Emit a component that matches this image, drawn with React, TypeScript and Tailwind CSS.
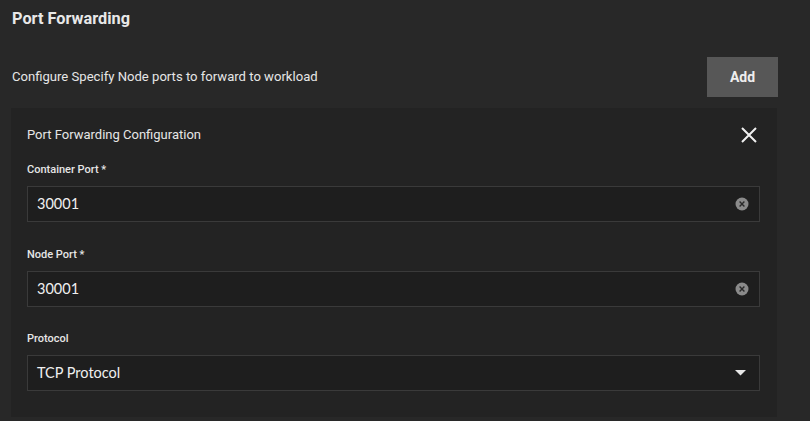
import React from "react";

function ClearIcon() {
  return (
    <svg width="14" height="14" viewBox="0 0 14 14">
      <circle cx="7" cy="7" r="6.5" fill="#8a8a8a" />
      <path d="M4.6 4.6 L9.4 9.4 M9.4 4.6 L4.6 9.4" stroke="#2a2a2a" strokeWidth="1.4" />
    </svg>
  );
}

function Field({ label, value, select }: { label: string; value: string; select?: boolean }) {
  return (
    <div className="flex flex-col">
      <div className="text-[11px] font-medium text-[#e6e6e6] leading-[18px] mb-[7px]">{label}</div>
      <div className="h-[36px] bg-[#1e1e1e] border border-[#3a3a3a] flex items-center pl-[9px] pr-[10px]">
        <span className="flex-1 text-[14.5px] text-[#f0f0f0] font-['Lato',sans-serif]">{value}</span>
        {select ? (
          <svg width="11" height="6" viewBox="0 0 11 6" className="mr-[3px]">
            <path d="M0 0 L11 0 L5.5 5.5 Z" fill="#e8e8e8" />
          </svg>
        ) : (
          <ClearIcon />
        )}
      </div>
    </div>
  );
}

export default function App() {
  return (
    <div className="w-[810px] h-[421px] bg-[#282828] overflow-hidden font-['Roboto',sans-serif] text-[#e6e6e6]">
      <div className="pl-[12px] pt-[8px] text-[16.3px] font-bold leading-[22px] text-[#e8e8e8]">Port Forwarding</div>
      <div className="flex items-center justify-between pl-[12px] pr-[32px] mt-[27px]">
        <div className="text-[13.1px]">Configure Specify Node ports to forward to workload</div>
        <button className="w-[71px] h-[40px] bg-[#575757] text-[14px] font-bold text-[#eeeeee]">Add</button>
      </div>
      <div className="ml-[11px] mr-[33px] mt-[11px] bg-[#232323] pl-[16px] pr-[17px] pt-[19px] pb-[26px]">
        <div className="flex items-center justify-between">
          <div className="text-[13px] leading-[16px]">Port Forwarding Configuration</div>
          <svg width="16" height="16" viewBox="0 0 16 16" className="mr-[3px]">
            <path d="M1 1 L15 15 M15 1 L1 15" stroke="#f0f0f0" strokeWidth="2" />
          </svg>
        </div>
        <div className="flex flex-col gap-[23.5px] mt-[18px]">
          <Field label="Container Port *" value="30001" />
          <Field label="Node Port *" value="30001" />
          <Field label="Protocol" value="TCP Protocol" select />
        </div>
      </div>
    </div>
  );
}
